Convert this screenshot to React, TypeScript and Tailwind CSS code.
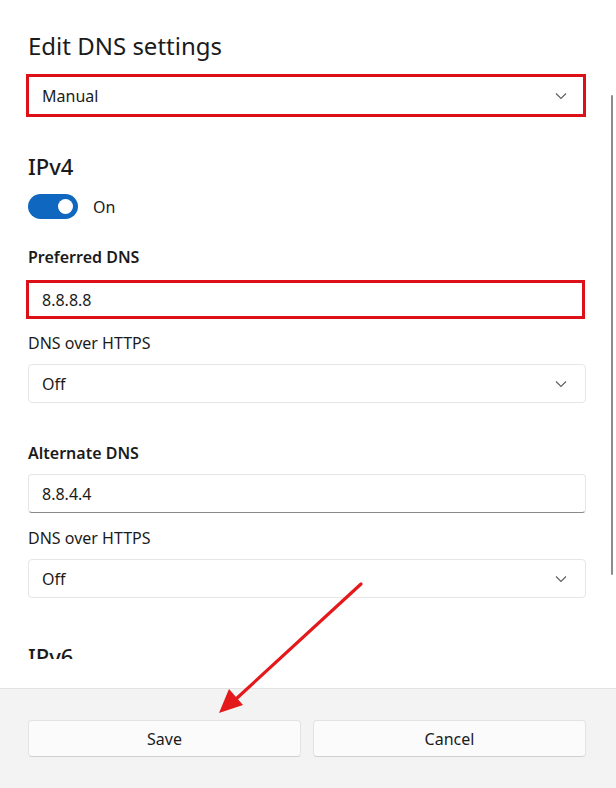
const red = "border-[3px] border-[#dc1016]";

function Chevron() {
  return (
    <svg width="12" height="8" viewBox="0 0 12 8" className="text-[#5c5c5c]">
      <polyline points="1,1.5 6,6.5 11,1.5" fill="none" stroke="currentColor" strokeWidth="1.1" />
    </svg>
  );
}

function Select({ value, highlight }: { value: string; highlight?: boolean }) {
  return (
    <div
      className={
        highlight
          ? `-ml-[2px] flex h-[43px] w-[560px] items-center justify-between pl-[13px] pr-[16px] ${red}`
          : "flex h-[39px] w-[558px] items-center justify-between rounded-[4px] border border-[#e6e6e6] bg-white pl-[13px] pr-[18px]"
      }
    >
      <span className="text-[16px] text-[#1b1b1b]">{value}</span>
      <Chevron />
    </div>
  );
}

function Field({ value, highlight }: { value: string; highlight?: boolean }) {
  return (
    <div
      className={
        highlight
          ? `-ml-[2px] flex h-[39px] w-[559px] items-center pl-[13px] ${red}`
          : "flex h-[39px] w-[558px] items-center rounded-[4px] border border-[#e6e6e6] border-b-[#8a8a8a] bg-white pl-[13px]"
      }
    >
      <span className="text-[16px] text-[#1b1b1b]">{value}</span>
    </div>
  );
}

function Label({ children, bold }: { children: React.ReactNode; bold?: boolean }) {
  return (
    <div className={`h-[22px] text-[16px] leading-[22px] text-[#1b1b1b] ${bold ? "font-semibold" : ""}`}>
      {children}
    </div>
  );
}

export default function App() {
  return (
    <div className="relative h-[788px] w-[616px] overflow-hidden bg-white font-['Noto_Sans',sans-serif]">
      <div className="relative h-[688px]">
        <div className="h-[659px] overflow-hidden pl-[28px] pt-[32px]">
          <h1 className="h-[28px] text-[24px] leading-[28px] text-[#1b1b1b]">Edit DNS settings</h1>
          <div className="mt-[14px]">
            <Select value="Manual" highlight />
          </div>

          <h2 className="mt-[35px] h-[28px] text-[22px] font-medium leading-[28px] text-[#1b1b1b]">IPv4</h2>
          <div className="mt-[14px] flex items-center gap-[15px]">
            <div className="flex h-[25px] w-[50px] items-center justify-end rounded-full bg-[#0f67c0] pr-[5px]">
              <div className="h-[15px] w-[15px] rounded-full bg-white" />
            </div>
            <span className="text-[16px] text-[#1b1b1b]">On</span>
          </div>

          <div className="mt-[27px]">
            <Label bold>Preferred DNS</Label>
          </div>
          <div className="mt-[12px]">
            <Field value="8.8.8.8" highlight />
          </div>
          <div className="mt-[13px]">
            <Label>DNS over HTTPS</Label>
          </div>
          <div className="mt-[10px]">
            <Select value="Off" />
          </div>

          <div className="mt-[39px]">
            <Label bold>Alternate DNS</Label>
          </div>
          <div className="mt-[10px]">
            <Field value="8.8.4.4" />
          </div>
          <div className="mt-[14px]">
            <Label>DNS over HTTPS</Label>
          </div>
          <div className="mt-[10px]">
            <Select value="Off" />
          </div>

          {/* next section, scrolled below the fold */}
          <h2 className="mt-[44px] h-[28px] text-[22px] font-medium leading-[28px] text-[#1b1b1b]">IPv6</h2>
        </div>

        {/* scrollbar */}
        <div className="absolute left-[611px] top-[95px] h-[480px] w-[2px] rounded-full bg-[#8c8c8c]" />
      </div>

      <footer className="flex h-[100px] gap-[12px] border-t border-[#e2e2e2] bg-[#f3f3f3] px-[28px] pt-[31px]">
        <button className="h-[37px] w-[273px] rounded-[4px] border border-[#e3e3e3] border-b-[#d0d0d0] bg-[#fbfbfb] text-[16px] text-[#1b1b1b]">
          Save
        </button>
        <button className="h-[37px] w-[273px] rounded-[4px] border border-[#e3e3e3] border-b-[#d0d0d0] bg-[#fbfbfb] text-[16px] text-[#1b1b1b]">
          Cancel
        </button>
      </footer>

      {/* annotation arrow */}
      <svg className="pointer-events-none absolute left-0 top-0" width="616" height="788">
        <line x1="361" y1="584" x2="236" y2="699" stroke="#e3191c" strokeWidth="3.2" strokeLinecap="round" />
        <polygon points="219,713 229,689 243,705" fill="#e3191c" />
      </svg>
    </div>
  );
}
